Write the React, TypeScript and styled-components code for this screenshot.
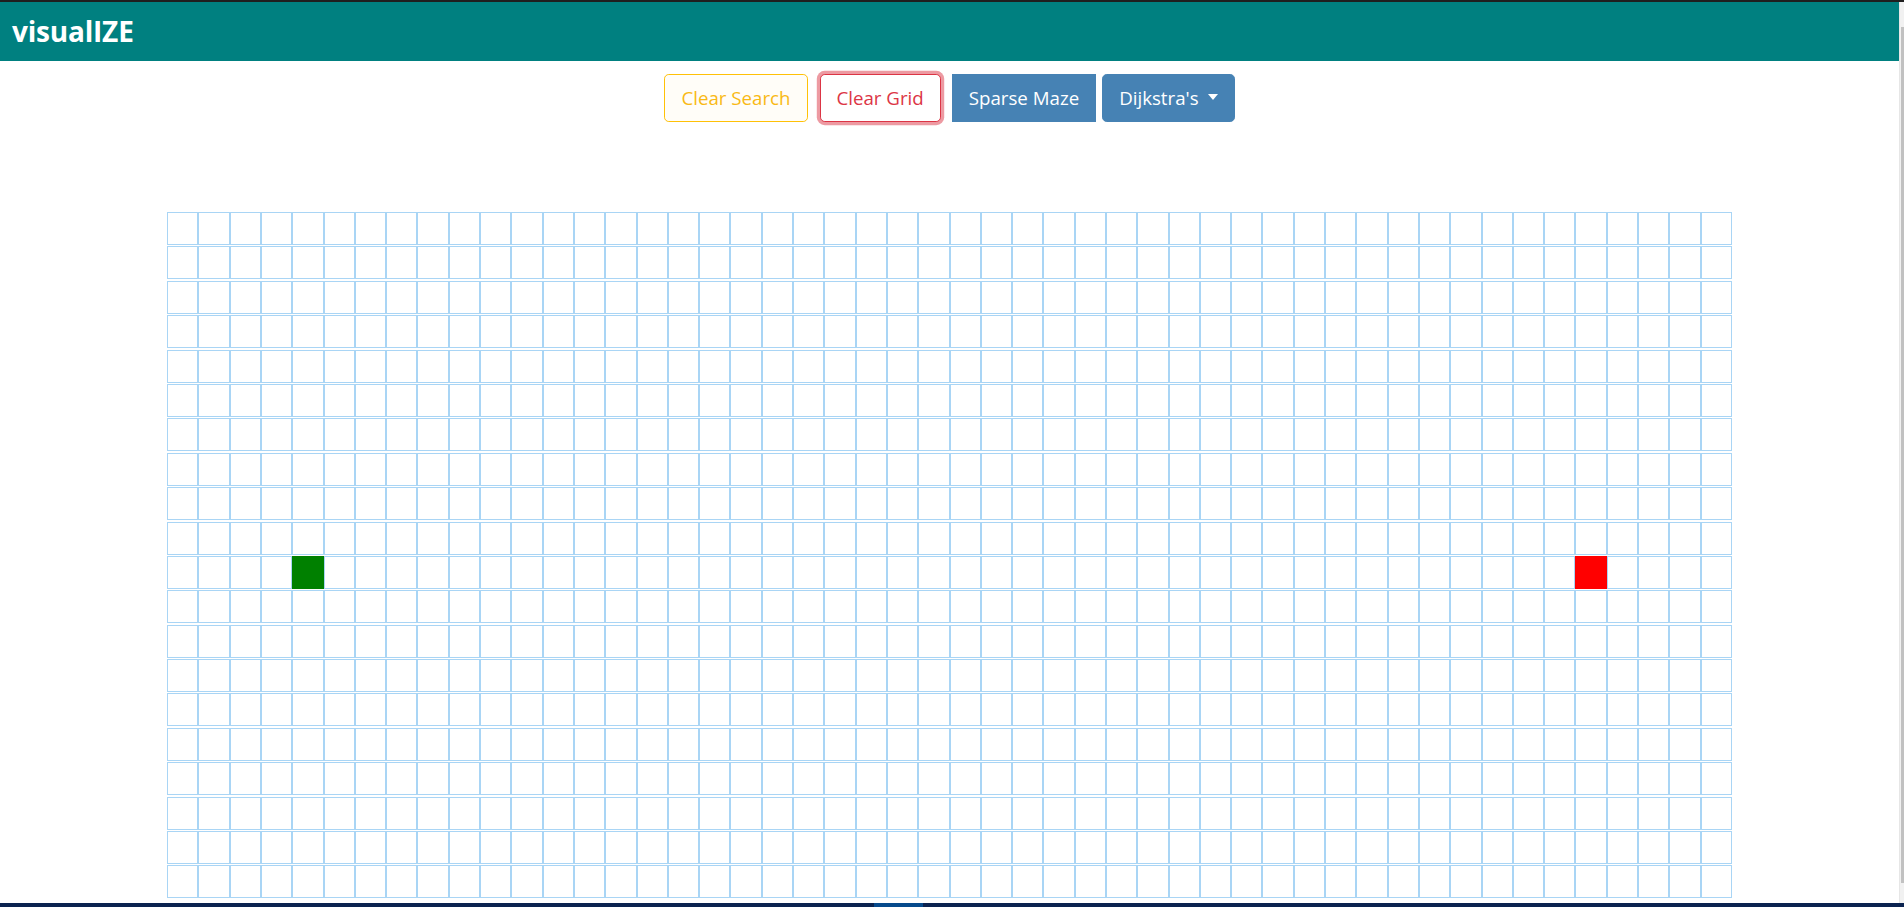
import React from "react";
import styled, { createGlobalStyle } from "styled-components";

const GlobalStyle = createGlobalStyle`
  html, body {
    margin: 0;
    padding: 0;
    background: #ffffff;
    overflow: hidden;
  }
  body {
    font-family: "Open Sans", "Noto Sans", sans-serif;
  }
  * { box-sizing: border-box; }
`;

const ROWS = 20;
const COLS = 50;
const START = { r: 10, c: 4 };
const FINISH = { r: 10, c: 45 };

const Page = styled.div`
  width: calc(100% - 5px);
  height: 907px;
  display: flex;
  flex-direction: column;
`;

const NavBar = styled.header`
  height: 61px;
  border-top: 2px solid #1f1f1f;
  background: #008080;
  display: flex;
  align-items: center;
  padding: 0 12px 2px 12px;
`;

const Brand = styled.span`
  color: #ffffff;
  font-family: "Open Sans", "Noto Sans", sans-serif;
  font-weight: 700;
  font-size: 28px;
  letter-spacing: -0.2px;
`;

const Toolbar = styled.div`
  display: flex;
  justify-content: center;
  align-items: center;
  margin-top: 13px;
  height: 48px;
`;

type Variant = "warning" | "danger" | "steel";

const Button = styled.button<{ $variant: Variant; $focus?: boolean; $square?: boolean; $gap?: number }>`
  height: 48px;
  padding: 0 16px;
  font-family: "Open Sans", "Noto Sans", sans-serif;
  font-size: 18.7px;
  line-height: 30px;
  border-radius: ${(p) => (p.$square ? "0" : "4.8px")};
  margin-right: ${(p) => p.$gap ?? 0}px;
  cursor: pointer;
  display: inline-flex;
  align-items: center;
  border: 1px solid
    ${(p) => (p.$variant === "warning" ? "#ffc107" : p.$variant === "danger" ? "#dc3545" : "#4682b4")};
  color: ${(p) => (p.$variant === "warning" ? "#f9b915" : p.$variant === "danger" ? "#dc3545" : "#ffffff")};
  background: ${(p) => (p.$variant === "steel" ? "#4682b4" : p.$variant === "warning" ? "#fffdf8" : "#ffffff")};
  box-shadow: ${(p) => (p.$focus ? "0 0 0 3.2px rgba(220, 53, 69, 0.5)" : "none")};
`;

const Caret = styled.span`
  display: inline-block;
  margin-left: 9px;
  margin-top: -2px;
  width: 0;
  height: 0;
  border-top: 6px solid #ffffff;
  border-left: 5.5px solid transparent;
  border-right: 5.5px solid transparent;
`;

const GridArea = styled.div`
  display: flex;
  justify-content: center;
  margin-top: 90px;
`;

const Board = styled.div`
  display: grid;
  grid-template-columns: repeat(${COLS}, 31.3px);
  grid-auto-rows: 33px;
  row-gap: 1.4px;
`;

type Kind = "empty" | "start" | "finish";

const Cell = styled.div<{ $kind: Kind }>`
  border: 1px solid
    ${(p) => (p.$kind === "start" ? "#008000" : p.$kind === "finish" ? "#ff0000" : "#a9d5f5")};
  background: ${(p) => (p.$kind === "start" ? "#008000" : p.$kind === "finish" ? "#ff0000" : "#ffffff")};
`;

const ScrollTrack = styled.div`
  position: fixed;
  top: 2px;
  right: 0;
  width: 5px;
  height: 901px;
  background: #f1f1f1;
  border-left: 1px solid #e6e6e6;
`;

const ScrollThumb = styled.div`
  position: absolute;
  top: 25px;
  right: 0;
  width: 3px;
  height: 856px;
  background: #c1c1c1;
`;

const TopStrip = styled.div`
  position: fixed;
  top: 0;
  right: 0;
  width: 5px;
  height: 2px;
  background: #1f1f1f;
`;

const TaskStrip = styled.div`
  position: fixed;
  left: 0;
  bottom: 0;
  width: 100%;
  height: 4px;
  background: #0b2350;
  display: flex;
`;

const TaskActive = styled.div`
  margin-left: 874px;
  width: 49px;
  height: 100%;
  background: #064a8c;
`;

export default function App() {
  const cells: React.ReactNode[] = [];
  for (let r = 0; r < ROWS; r++) {
    for (let c = 0; c < COLS; c++) {
      const kind: Kind =
        r === START.r && c === START.c ? "start" : r === FINISH.r && c === FINISH.c ? "finish" : "empty";
      cells.push(<Cell key={`${r}-${c}`} $kind={kind} />);
    }
  }
  return (
    <>
      <GlobalStyle />
      <Page>
        <NavBar>
          <Brand>visualIZE</Brand>
        </NavBar>
        <Toolbar>
          <Button $variant="warning" $gap={12}>Clear Search</Button>
          <Button $variant="danger" $focus $gap={11}>Clear Grid</Button>
          <Button $variant="steel" $square $gap={6}>Sparse Maze</Button>
          <Button $variant="steel">
            Dijkstra's
            <Caret />
          </Button>
        </Toolbar>
        <GridArea>
          <Board>{cells}</Board>
        </GridArea>
      </Page>
      <TopStrip />
      <ScrollTrack>
        <ScrollThumb />
      </ScrollTrack>
      <TaskStrip>
        <TaskActive />
      </TaskStrip>
    </>
  );
}
